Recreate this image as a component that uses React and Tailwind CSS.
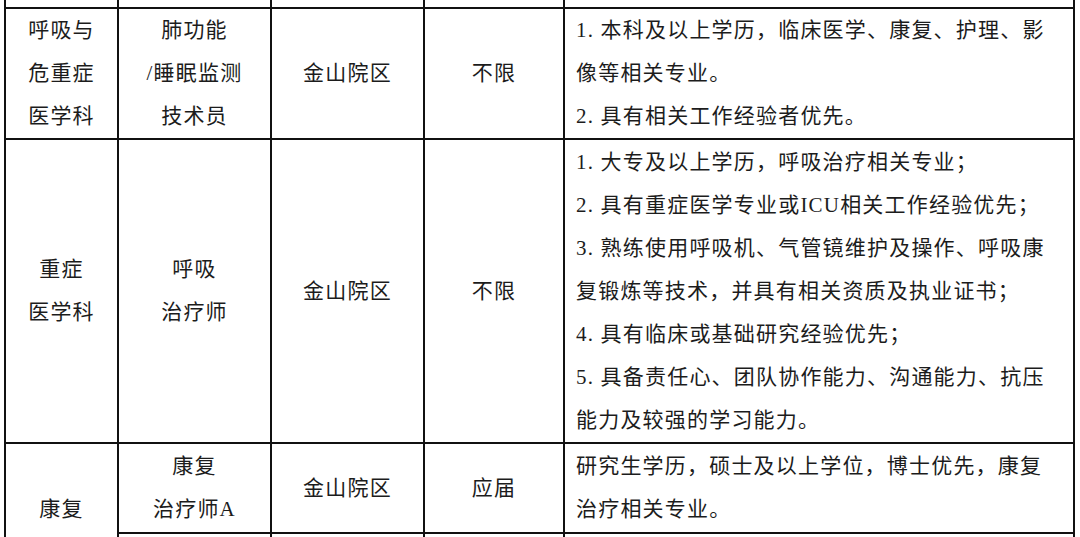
import React from 'react';

const font = { fontFamily: '"Liberation Serif", "Noto Sans CJK SC", serif' };

const rows = [
  {
    dept: ['呼吸与', '危重症', '医学科'],
    post: ['肺功能', '/睡眠监测', '技术员'],
    campus: '金山院区',
    limit: '不限',
    req: ['1. 本科及以上学历，临床医学、康复、护理、影', '像等相关专业。', '2. 具有相关工作经验者优先。'],
    h: 'h-[131px]',
  },
  {
    dept: ['重症', '医学科'],
    post: ['呼吸', '治疗师'],
    campus: '金山院区',
    limit: '不限',
    req: [
      '1. 大专及以上学历，呼吸治疗相关专业；',
      '2. 具有重症医学专业或ICU相关工作经验优先；',
      '3. 熟练使用呼吸机、气管镜维护及操作、呼吸康',
      '复锻炼等技术，并具有相关资质及执业证书；',
      '4. 具有临床或基础研究经验优先；',
      '5. 具备责任心、团队协作能力、沟通能力、抗压',
      '能力及较强的学习能力。',
    ],
    h: 'h-[304px]',
  },
];

const cell = 'border-2 border-[#111] p-0 align-middle';

function Lines({ items, left }) {
  return (
    <div className={left ? 'text-left pl-[11px]' : 'text-center'}>
      {items.map((t, i) => (
        <div key={i} className="leading-[43px] whitespace-nowrap">{t}</div>
      ))}
    </div>
  );
}

export default function App() {
  return (
    <div className="h-[537px] w-[1080px] overflow-hidden bg-white pl-[4px]" style={font}>
      <table className="table-fixed border-collapse w-[1071px] text-[21px] tracking-[1.2px] text-[#1c1c1c]">
        <colgroup>
          <col className="w-[113px]" />
          <col className="w-[153px]" />
          <col className="w-[153px]" />
          <col className="w-[140px]" />
          <col className="w-[510px]" />
        </colgroup>
        <tbody>
          <tr className="h-[8px]">
            {[0, 1, 2, 3, 4].map((i) => (
              <td key={i} className="border-2 border-t-0 border-[#111] p-0" />
            ))}
          </tr>
          {rows.map((r, i) => (
            <tr key={i} className={r.h}>
              <td className={cell}><Lines items={r.dept} /></td>
              <td className={cell}><Lines items={r.post} /></td>
              <td className={cell}><Lines items={[r.campus]} /></td>
              <td className={cell}><Lines items={[r.limit]} /></td>
              <td className={cell}><Lines items={r.req} left /></td>
            </tr>
          ))}
          <tr className="h-[90px]">
            <td rowSpan={2} className="border-2 border-[#111] p-0 align-top">
              <div className="text-center pt-[44px] leading-[43px]">康复</div>
            </td>
            <td className={cell}><Lines items={['康复', '治疗师A']} /></td>
            <td className={cell}><Lines items={['金山院区']} /></td>
            <td className={cell}><Lines items={['应届']} /></td>
            <td className={cell}>
              <Lines items={['研究生学历，硕士及以上学位，博士优先，康复', '治疗相关专业。']} left />
            </td>
          </tr>
          <tr className="h-[60px]">
            <td className={cell} />
            <td className={cell} />
            <td className={cell} />
            <td className={cell} />
          </tr>
        </tbody>
      </table>
    </div>
  );
}
